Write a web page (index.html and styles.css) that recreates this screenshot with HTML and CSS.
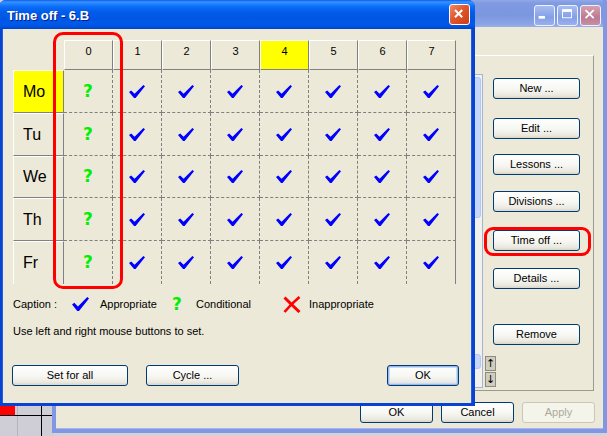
FILE: index.html
```html
<!DOCTYPE html>
<html>
<head>
<meta charset="utf-8">
<title>Time off - 6.B</title>
<link rel="stylesheet" href="styles.css">
</head>
<body>
<svg class="defs" width="0" height="0" aria-hidden="true">
  <symbol id="chk" viewBox="0 0 16 13">
    <polygon points="0,7 2.2,5.4 5.6,8.8 14.4,0 16,1.3 6.6,13 5,13" fill="#0000ff"/>
  </symbol>
</svg>
<div class="desktop">
  <div class="sheet"></div>

  <div class="bgwin">
    <div class="bg-title">
      <span class="tbb"><svg viewBox="0 0 21 21" width="19" height="19"><rect x="4" y="11" width="7" height="3" fill="#fff"/></svg></span>
      <span class="tbb"><svg viewBox="0 0 21 21" width="19" height="19"><rect x="5" y="4" width="10" height="9" fill="none" stroke="#fff" stroke-width="1"/><rect x="5" y="4" width="10" height="2.5" fill="#fff"/></svg></span>
      <span class="tbb tbb-close"><svg viewBox="0 0 21 21" width="19" height="19"><path d="M5 4.5 L14 13.5 M14 4.5 L5 13.5" stroke="#fff" stroke-width="2"/></svg></span>
    </div>
    <div class="bg-body">
      <div class="bg-main">
        <div class="panel">
          <div class="listbox">
            <div class="vscroll">
              <div class="sb-thumb"><span class="sb-mark"></span></div>
              <div class="sb-down"><span class="sb-mark"></span></div>
            </div>
          </div>
          <div class="side">
            <button class="btn side-btn first">New ...</button>
            <button class="btn side-btn g19">Edit ...</button>
            <button class="btn side-btn g15">Lessons ...</button>
            <button class="btn side-btn g16">Divisions ...</button>
            <button class="btn side-btn g18 hl">Time off ...</button>
            <button class="btn side-btn g17">Details ...</button>
            <button class="btn side-btn g35">Remove</button>
            <div class="arrows">
              <span class="arr">↑</span>
              <span class="arr">↓</span>
            </div>
          </div>
        </div>
      </div>
      <div class="bg-foot">
        <button class="btn foot-btn">OK</button>
        <button class="btn foot-btn">Cancel</button>
        <button class="btn foot-btn" disabled>Apply</button>
      </div>
    </div>
  </div>

  <div class="dialog">
    <div class="dlg-title">
      <span class="dlg-caption">Time off - 6.B</span>
      <span class="dlg-close"><svg viewBox="0 0 21 21" width="19" height="19"><path d="M5.5 5.5 L13.5 13.5 M13.5 5.5 L5.5 13.5" stroke="#fff" stroke-width="2.2"/></svg></span>
    </div>
    <div class="dlg-body">
      <div class="grid-wrap">
        <div class="tt">
          <div class="corner"></div>
          <div class="hd">0</div><div class="hd">1</div><div class="hd">2</div><div class="hd">3</div><div class="hd hd-yel">4</div><div class="hd">5</div><div class="hd">6</div><div class="hd">7</div>

          <div class="day day-yel">Mo</div>
          <div class="c"><span class="q">?</span></div>
          <div class="c"><svg class="ck"><use href="#chk"/></svg></div>
          <div class="c"><svg class="ck"><use href="#chk"/></svg></div>
          <div class="c"><svg class="ck"><use href="#chk"/></svg></div>
          <div class="c"><svg class="ck"><use href="#chk"/></svg></div>
          <div class="c"><svg class="ck"><use href="#chk"/></svg></div>
          <div class="c"><svg class="ck"><use href="#chk"/></svg></div>
          <div class="c lc"><svg class="ck"><use href="#chk"/></svg></div>

          <div class="day">Tu</div>
          <div class="c"><span class="q">?</span></div>
          <div class="c"><svg class="ck"><use href="#chk"/></svg></div>
          <div class="c"><svg class="ck"><use href="#chk"/></svg></div>
          <div class="c"><svg class="ck"><use href="#chk"/></svg></div>
          <div class="c"><svg class="ck"><use href="#chk"/></svg></div>
          <div class="c"><svg class="ck"><use href="#chk"/></svg></div>
          <div class="c"><svg class="ck"><use href="#chk"/></svg></div>
          <div class="c lc"><svg class="ck"><use href="#chk"/></svg></div>

          <div class="day">We</div>
          <div class="c"><span class="q">?</span></div>
          <div class="c"><svg class="ck"><use href="#chk"/></svg></div>
          <div class="c"><svg class="ck"><use href="#chk"/></svg></div>
          <div class="c"><svg class="ck"><use href="#chk"/></svg></div>
          <div class="c"><svg class="ck"><use href="#chk"/></svg></div>
          <div class="c"><svg class="ck"><use href="#chk"/></svg></div>
          <div class="c"><svg class="ck"><use href="#chk"/></svg></div>
          <div class="c lc"><svg class="ck"><use href="#chk"/></svg></div>

          <div class="day">Th</div>
          <div class="c"><span class="q">?</span></div>
          <div class="c"><svg class="ck"><use href="#chk"/></svg></div>
          <div class="c"><svg class="ck"><use href="#chk"/></svg></div>
          <div class="c"><svg class="ck"><use href="#chk"/></svg></div>
          <div class="c"><svg class="ck"><use href="#chk"/></svg></div>
          <div class="c"><svg class="ck"><use href="#chk"/></svg></div>
          <div class="c"><svg class="ck"><use href="#chk"/></svg></div>
          <div class="c lc"><svg class="ck"><use href="#chk"/></svg></div>

          <div class="day lr">Fr</div>
          <div class="c lr"><span class="q">?</span></div>
          <div class="c lr"><svg class="ck"><use href="#chk"/></svg></div>
          <div class="c lr"><svg class="ck"><use href="#chk"/></svg></div>
          <div class="c lr"><svg class="ck"><use href="#chk"/></svg></div>
          <div class="c lr"><svg class="ck"><use href="#chk"/></svg></div>
          <div class="c lr"><svg class="ck"><use href="#chk"/></svg></div>
          <div class="c lr"><svg class="ck"><use href="#chk"/></svg></div>
          <div class="c lr lc"><svg class="ck"><use href="#chk"/></svg></div>
        </div>
        <div class="annot-col"></div>
      </div>

      <div class="legend">
        <span class="lg-label">Caption :</span>
        <span class="lg-icon lg-i1"><svg class="ck ck-lg"><use href="#chk"/></svg></span>
        <span class="lg-text lg-t1">Appropriate</span>
        <span class="lg-icon lg-i2"><span class="q">?</span></span>
        <span class="lg-text lg-t2">Conditional</span>
        <span class="lg-icon lg-i3"><svg class="ix" viewBox="0 0 18 17"><path d="M1.5 1.5 C6 6 11 11 16.5 16" stroke="#ff0000" stroke-width="3" fill="none"/><path d="M16.5 1 C11 5.5 6 10.5 1.5 16" stroke="#ff0000" stroke-width="2.6" fill="none"/></svg></span>
        <span class="lg-text">Inappropriate</span>
      </div>

      <p class="hint">Use left and right mouse buttons to set.</p>

      <div class="dlg-btns">
        <button class="btn b-setall">Set for all</button>
        <button class="btn b-cycle">Cycle ...</button>
        <button class="btn b-ok">OK</button>
      </div>
    </div>
  </div>
</div>
</body>
</html>
```

FILE: styles.css
```css
* { box-sizing: border-box; margin: 0; padding: 0; }
html, body { width: 607px; height: 436px; overflow: hidden; }
body {
  font-family: "Liberation Sans", Arial, sans-serif;
  font-size: 11px;
  color: #000;
  background: #d2d1d9;
}
.defs { position: absolute; width: 0; height: 0; overflow: hidden; }

.desktop {
  position: relative;
  width: 607px;
  height: 436px;
  overflow: hidden;
  background: #d3d2da;
}

/* spreadsheet fragment behind the windows */
.sheet {
  position: absolute;
  left: 0;
  top: 405px;
  width: 54px;
  height: 31px;
  background:
    linear-gradient(#ff0000, #ff0000) 0 0 / 15px 10px no-repeat,
    linear-gradient(#000, #000) 0 10px / 54px 1px no-repeat,
    linear-gradient(#000, #000) 41px 0 / 1px 31px no-repeat,
    linear-gradient(#b4b4bc, #b4b4bc) 17px 0 / 1px 31px no-repeat,
    #cfced6;
}

/* ---------- buttons (XP look) ---------- */
.btn {
  font-family: "Liberation Sans", Arial, sans-serif;
  font-size: 11px;
  color: #000;
  height: 21px;
  border: 1px solid #003c74;
  border-radius: 3px;
  background: linear-gradient(#ffffff 0%, #f6f6f2 55%, #ebe9e0 85%, #d8d5c8 100%);
  display: flex;
  align-items: center;
  justify-content: center;
  padding: 0 0 1px;
}
.btn:disabled {
  color: #aca899;
  border-color: #c9c7ba;
  background: #f5f4ea;
}

/* ---------- background window ---------- */
.bgwin {
  position: absolute;
  left: 52px;
  top: -3px;
  width: 556px;
  height: 436px;
  display: flex;
  flex-direction: column;
  border: 4px solid #8297e3;
  border-top: 0;
  border-right-width: 5px;
  border-radius: 8px 8px 0 0;
  background: #ece9d8;
  box-shadow: inset 0 -1px 0 #a9b6ee;
}
.bg-title {
  height: 30px;
  flex: none;
  display: flex;
  justify-content: flex-end;
  align-items: flex-start;
  gap: 2px;
  padding: 8px 2px 0 0;
  background: linear-gradient(#a1b6ec 0%, #819be3 20%, #7a96df 60%, #8ba4e6 90%, #9aafea 100%);
}
.tbb {
  width: 21px;
  height: 21px;
  border: 1px solid #eef2fc;
  border-radius: 3px;
  background: linear-gradient(#a8bdf2, #839fe6 60%, #9ab1ee);
  display: flex;
}
.tbb-close {
  background: linear-gradient(#d7a0b2, #bb7b92 60%, #c98ea3);
}
.bg-body {
  flex: 1;
  display: flex;
  flex-direction: column;
}
.bg-main {
  flex: 1;
  display: flex;
  justify-content: flex-end;
  padding: 28px 9px 0 0;
}
.panel {
  width: 294px;
  height: 336px;
  display: flex;
  border-top: 1px solid #ffffff;
  border-left: 1px solid #ffffff;
  border-right: 1px solid #9c9a90;
  border-bottom: 1px solid #9c9a90;
}
.listbox {
  width: 177px;
  height: 314px;
  margin: 18px 0 0 5px;
  border: 1px solid #a3b5d6;
  background: #fff;
  display: flex;
  justify-content: flex-end;
}
.vscroll {
  width: 16px;
  display: flex;
  flex-direction: column;
  background: #f2f1ec;
  padding: 1px 0;
}
.sb-thumb {
  height: 141px;
  margin: 1px 1px 0 1px;
  border: 1px solid #b3c7f3;
  border-radius: 3px;
  background: #c6d7fb;
  display: flex;
  align-items: flex-start;
  padding: 8px 0 0 1px;
}
.sb-down {
  height: 15px;
  margin: auto 1px 17px 1px;
  border: 1px solid #b3c7f3;
  border-radius: 3px;
  background: #c6d7fb;
  display: flex;
  align-items: center;
  padding-left: 1px;
}
.sb-mark {
  width: 0;
  height: 0;
  border-top: 2px solid transparent;
  border-bottom: 2px solid transparent;
  border-left: 3px solid #4d6185;
}
.side {
  width: 87px;
  margin-left: 10px;
  display: flex;
  flex-direction: column;
}
.side-btn { width: 87px; flex: none; }
.first { margin-top: 22px; }
.g15 { margin-top: 15px; }
.g16 { margin-top: 16px; }
.g17 { margin-top: 17px; }
.g18 { margin-top: 18px; }
.g19 { margin-top: 19px; }
.g35 { margin-top: 35px; }
.hl { position: relative; }
.hl::after {
  content: "";
  position: absolute;
  left: -10px;
  right: -12px;
  top: -4px;
  bottom: -6px;
  border: 3px solid #ff0000;
  border-radius: 9px;
}
.arrows {
  margin: 11px 0 0 -8px;
  display: flex;
  flex-direction: column;
  gap: 1px;
}
.arr {
  width: 11px;
  height: 15px;
  border: 1px solid #8d8a7e;
  background: #cfccc0;
  font-family: "DejaVu Sans", sans-serif;
  font-size: 11px;
  line-height: 13px;
  text-align: center;
  color: #000;
}
.bg-foot {
  flex: none;
  display: flex;
  justify-content: flex-end;
  gap: 8px;
  padding: 0 8px 6px 0;
}
.foot-btn { width: 73px; }

/* ---------- dialog ---------- */
.dialog {
  position: absolute;
  left: -1px;
  top: 0;
  width: 476px;
  height: 406px;
  display: flex;
  flex-direction: column;
  border: 3px solid #0a43d2;
  border-top: 0;
  border-radius: 7px 7px 0 0;
  background: #ece9d8;
  box-shadow: inset 1px 0 0 #1f5ee6, inset -1px 0 0 #1f5ee6;
}
.dlg-title {
  height: 29px;
  flex: none;
  display: flex;
  align-items: center;
  justify-content: space-between;
  margin: 0 -3px;
  padding: 0 5px 0 8px;
  border-radius: 7px 7px 0 0;
  background: linear-gradient(#0a5ee8 0px, #3b91ff 2px, #1e82ff 4px, #0a6cf7 7px, #025ce9 12px, #0056e4 19px, #005ae9 24px, #0052dd 27px, #0040c8 29px);
}
.dlg-caption {
  color: #fff;
  font-family: "Liberation Sans", Arial, sans-serif;
  font-weight: bold;
  font-size: 13px;
  text-shadow: 1px 1px 0 #0a1e8c;
  padding-top: 1px;
}
.dlg-close {
  width: 21px;
  height: 21px;
  border: 1px solid #ffffff;
  border-radius: 3px;
  background: linear-gradient(135deg, #ec8a6a 0%, #e0572e 45%, #cd3d14 100%);
  display: flex;
}
.dlg-body {
  flex: 1;
  display: flex;
  flex-direction: column;
  padding: 11px 0 0 11px;
}

.grid-wrap { position: relative; width: 443px; }
.tt {
  display: grid;
  grid-template-columns: 51px repeat(8, 49px);
  grid-template-rows: 30px 43px 43px 42px 43px 43px;
}
.hd {
  border-top: 1px solid #ffffff;
  border-left: 1px solid #ffffff;
  border-right: 1px solid #808080;
  border-bottom: 1px solid #808080;
  text-align: center;
  padding-top: 4px;
  font-size: 11px;
  line-height: 13px;
}
.hd-yel { background: #ffff00; }
.day {
  border-top: 1px solid #ffffff;
  border-left: 1px solid #ffffff;
  border-right: 1px solid #808080;
  border-bottom: 1px solid #808080;
  font-size: 16px;
  display: flex;
  align-items: center;
  padding-left: 9px;
}
.day-yel { background: #ffff00; }
.c {
  border-right: 1px dashed #808080;
  border-bottom: 1px dashed #808080;
  display: flex;
  align-items: center;
  justify-content: center;
}
.day.lr, .c.lr { border-bottom: 0; }
.c.lc { border-right: 1px solid #808080; }
.ck { width: 16px; height: 13px; display: block; }
.q {
  font-family: "DejaVu Sans", sans-serif;
  font-weight: bold;
  font-size: 17px;
  line-height: 17px;
  color: #00f000;
}
.annot-col {
  position: absolute;
  left: 40px;
  top: -8px;
  width: 70px;
  height: 257px;
  border: 3px solid #ff0000;
  border-radius: 10px;
}

.legend {
  display: flex;
  align-items: center;
  height: 18px;
  margin-top: 11px;
  line-height: 13px;
}
.lg-label { width: 59px; }
.lg-icon { display: flex; align-items: center; }
.lg-i1 { width: 28px; }
.lg-i2 { width: 24px; }
.lg-i3 { width: 26px; }
.lg-t1 { width: 72px; }
.lg-t2 { width: 87px; }
.ck-lg { width: 17px; height: 14px; }
.ix { width: 18px; height: 17px; display: block; }

.hint {
  margin-top: 11px;
  line-height: 14px;
}

.dlg-btns {
  margin-top: auto;
  display: flex;
  padding: 0 13px 17px 0;
  margin-left: -1px;
}
.b-setall { width: 116px; }
.b-cycle { width: 93px; margin-left: 18px; }
.b-ok {
  width: 72px;
  margin-left: auto;
  box-shadow: inset 0 0 0 1px #98b8ee, inset 0 0 0 2px #c6dafb;
}
```
